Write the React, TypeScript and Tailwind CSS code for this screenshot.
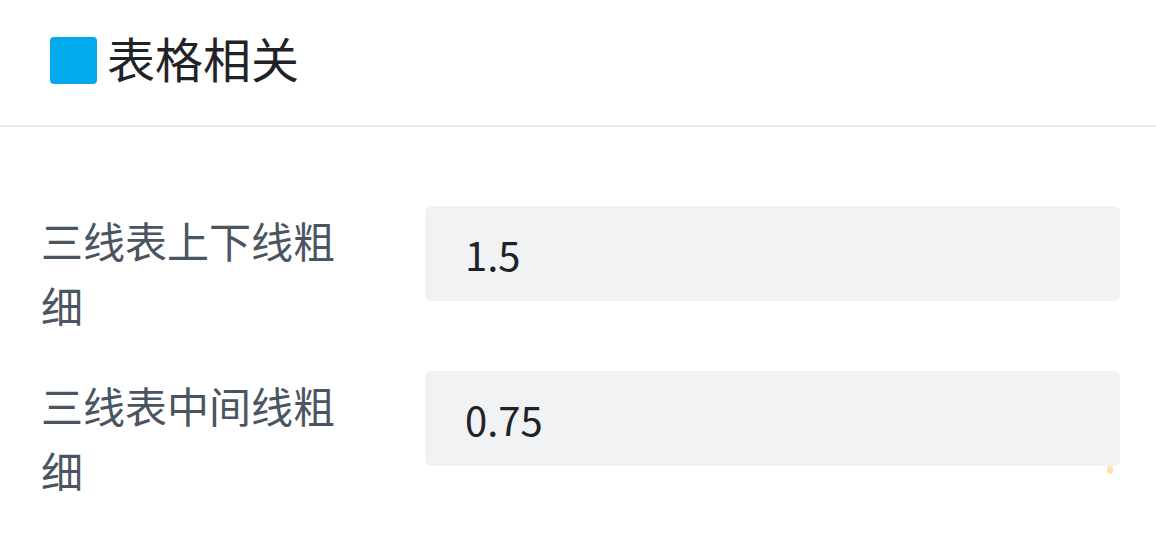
import React from "react";

const rows = [
  { label: "三线表上下线粗细", value: "1.5" },
  { label: "三线表中间线粗细", value: "0.75" },
];

export default function App() {
  return (
    <div
      className="w-[1156px] h-[552px] bg-white overflow-hidden relative"
      style={{ fontFamily: '"Noto Sans CJK SC", "Noto Sans", sans-serif' }}
    >
      <div className="h-[127px] flex items-center pl-[50px] pb-[5px] border-b-2 border-[#e6e7ea]">
        <div className="w-[47px] h-[47px] rounded-[4px] bg-[#03a9ed]" />
        <div className="ml-[10px] -mt-[6px] text-[48px] leading-none text-[#1f2328]">表格相关</div>
      </div>
      <div className="pt-[79px] pl-[41px] pr-[36px] flex flex-col gap-[30px]">
        {rows.map((r) => (
          <div key={r.label} className="flex items-start">
            <div className="w-[384px] pr-[84px] mt-[1px] mb-[4px] text-[42px] leading-[65px] text-[#4a5561]">
              {r.label}
            </div>
            <div className="flex-1 h-[95px] rounded-[6px] bg-[#f1f2f4] flex items-center pl-[40px] text-[40px] text-[#1f2328]">
              {r.value}
            </div>
          </div>
        ))}
      </div>
      <div className="absolute left-[1107px] top-[466px] w-[6px] h-[8px] rounded-full bg-[#fde3a7]" />
    </div>
  );
}
